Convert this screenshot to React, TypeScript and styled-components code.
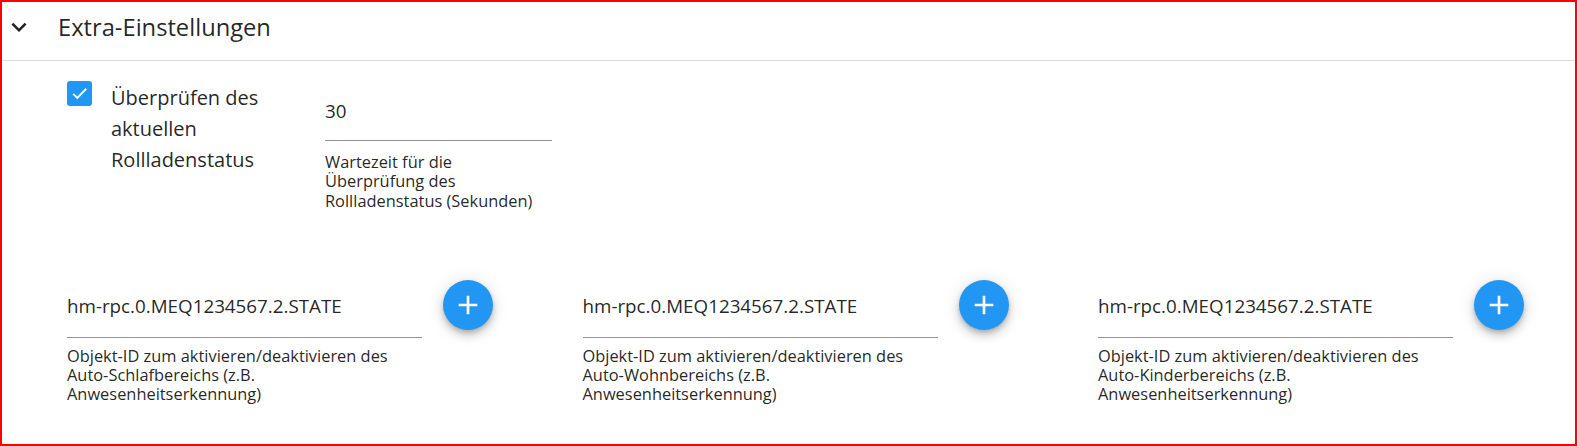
import React from 'react';
import styled, { createGlobalStyle } from 'styled-components';

const GlobalStyle = createGlobalStyle`
  html, body {
    margin: 0;
    padding: 0;
    background: #fff;
  }
  body {
    font-family: "Open Sans", "Noto Sans", Arial, sans-serif;
    color: rgba(0, 0, 0, 0.87);
  }
`;

const Frame = styled.div`
  box-sizing: border-box;
  width: 1577px;
  height: 446px;
  border: 2px solid #ff0000;
  background: #fff;
  overflow: hidden;
`;

const Header = styled.div`
  display: flex;
  align-items: center;
  height: 58px;
  border-bottom: 1px solid #dcdcdc;
`;

const ExpandIcon = styled.svg`
  width: 30px;
  height: 30px;
  margin: -8px 0 0 2px;
  fill: rgba(0, 0, 0, 0.87);
  flex-shrink: 0;
`;

const Title = styled.h2`
  margin: -8px 0 0 24px;
  font-size: 23.7px;
  font-weight: 400;
  line-height: 30px;
  color: rgba(0, 0, 0, 0.87);
`;

const Body = styled.div`
  padding: 20px 0 0 65px;
`;

const TopRow = styled.div`
  display: flex;
  align-items: flex-start;
`;

const CheckBox = styled.span`
  display: flex;
  align-items: center;
  justify-content: center;
  width: 25px;
  height: 25px;
  border-radius: 3px;
  background: #2196f3;
  flex-shrink: 0;
`;

const CheckLabel = styled.div`
  width: 190px;
  margin: 1px 0 0 19px;
  font-size: 20px;
  line-height: 31px;
`;

const Field = styled.div<{ $width: number; $offset: number }>`
  display: flex;
  flex-direction: column;
  width: ${(p) => p.$width}px;
  margin-top: ${(p) => p.$offset}px;
`;

const InputLine = styled.div<{ $pad: number }>`
  font-size: 18.8px;
  line-height: 24px;
  padding-bottom: ${(p) => p.$pad}px;
  border-bottom: 1px solid rgba(0, 0, 0, 0.42);
  white-space: nowrap;
`;

const Helper = styled.p<{ $width?: number; $gap: number }>`
  margin: ${(p) => p.$gap}px 0 0 0;
  font-size: 16.4px;
  line-height: 19.3px;
  max-width: ${(p) => (p.$width ? `${p.$width}px` : 'none')};
`;

const NoBreak = styled.span`
  white-space: nowrap;
`;

const Objects = styled.div`
  display: grid;
  grid-template-columns: repeat(3, 515.5px);
  margin-top: 69px;
`;

const ObjectCell = styled.div`
  display: flex;
  align-items: flex-start;
  gap: 21px;
`;

const AddButton = styled.button`
  display: flex;
  align-items: center;
  justify-content: center;
  width: 50px;
  height: 50px;
  margin-top: 1px;
  padding: 0;
  border: none;
  border-radius: 50%;
  background: #2196f3;
  box-shadow: 0 3px 5px -1px rgba(0, 0, 0, 0.2), 0 6px 10px 0 rgba(0, 0, 0, 0.14),
    0 1px 18px 0 rgba(0, 0, 0, 0.12);
  cursor: pointer;
  flex-shrink: 0;

  svg {
    width: 32px;
    height: 32px;
    fill: #fff;
  }
`;

const objectIds = [
  { id: 'hm-rpc.0.MEQ1234567.2.STATE', area: 'Auto-Schlafbereichs' },
  { id: 'hm-rpc.0.MEQ1234567.2.STATE', area: 'Auto-Wohnbereichs' },
  { id: 'hm-rpc.0.MEQ1234567.2.STATE', area: 'Auto-Kinderbereichs' },
];

const App: React.FC = () => (
  <>
    <GlobalStyle />
    <Frame>
      <Header>
        <ExpandIcon viewBox="0 0 24 24">
          <path d="M16.59 8.59 12 13.17 7.41 8.59 6 10l6 6 6-6z" />
        </ExpandIcon>
        <Title>Extra-Einstellungen</Title>
      </Header>
      <Body>
        <TopRow>
          <CheckBox>
            <svg width="19" height="19" viewBox="0 0 24 24">
              <path d="M4 12.5 9.2 17.5 20.5 6" fill="none" stroke="#fff" strokeWidth="2.4" />
            </svg>
          </CheckBox>
          <CheckLabel>Überprüfen des aktuellen Rollladenstatus</CheckLabel>
          <Field $width={227} $offset={18} style={{ marginLeft: 24 }}>
            <InputLine $pad={17}>30</InputLine>
            <Helper $width={215} $gap={11}>
              Wartezeit für die Überprüfung des Rollladenstatus (Sekunden)
            </Helper>
          </Field>
        </TopRow>
        <Objects>
          {objectIds.map((o) => (
            <ObjectCell key={o.area}>
              <Field $width={355} $offset={15}>
                <InputLine $pad={19}>{o.id}</InputLine>
                <Helper $gap={8}>
                  Objekt-ID zum aktivieren/deaktivieren des <NoBreak>{o.area}</NoBreak> (z.B.
                  Anwesenheitserkennung)
                </Helper>
              </Field>
              <AddButton aria-label="add">
                <svg viewBox="0 0 24 24">
                  <path d="M19 13h-6v6h-2v-6H5v-2h6V5h2v6h6v2z" />
                </svg>
              </AddButton>
            </ObjectCell>
          ))}
        </Objects>
      </Body>
    </Frame>
  </>
);

export default App;
